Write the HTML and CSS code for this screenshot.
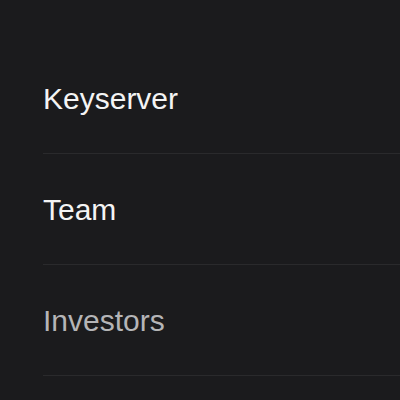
FILE: index.html
```html
<!DOCTYPE html>
<html>
<head>
<meta charset="utf-8">
<link rel="stylesheet" href="styles.css">
</head>
<body>
<ul class="menu">
  <li class="menu-item">Keyserver</li>
  <li class="menu-item">Team</li>
  <li class="menu-item muted">Investors</li>
</ul>
</body>
</html>
```
FILE: styles.css
```css
html, body {
  margin: 0;
  padding: 0;
  background: #1b1b1d;
  height: 100%;
}
.menu {
  list-style: none;
  margin: 0;
  padding: 43px 0 0 43px;
  font-family: "Liberation Sans", Arial, sans-serif;
}
.menu-item {
  height: 71px;
  padding-top: 39px;
  border-bottom: 1px solid #2a2a2c;
  font-size: 30px;
  line-height: 34px;
  color: #f4f4f4;
}
.muted {
  color: #b5b5b7;
}
```
